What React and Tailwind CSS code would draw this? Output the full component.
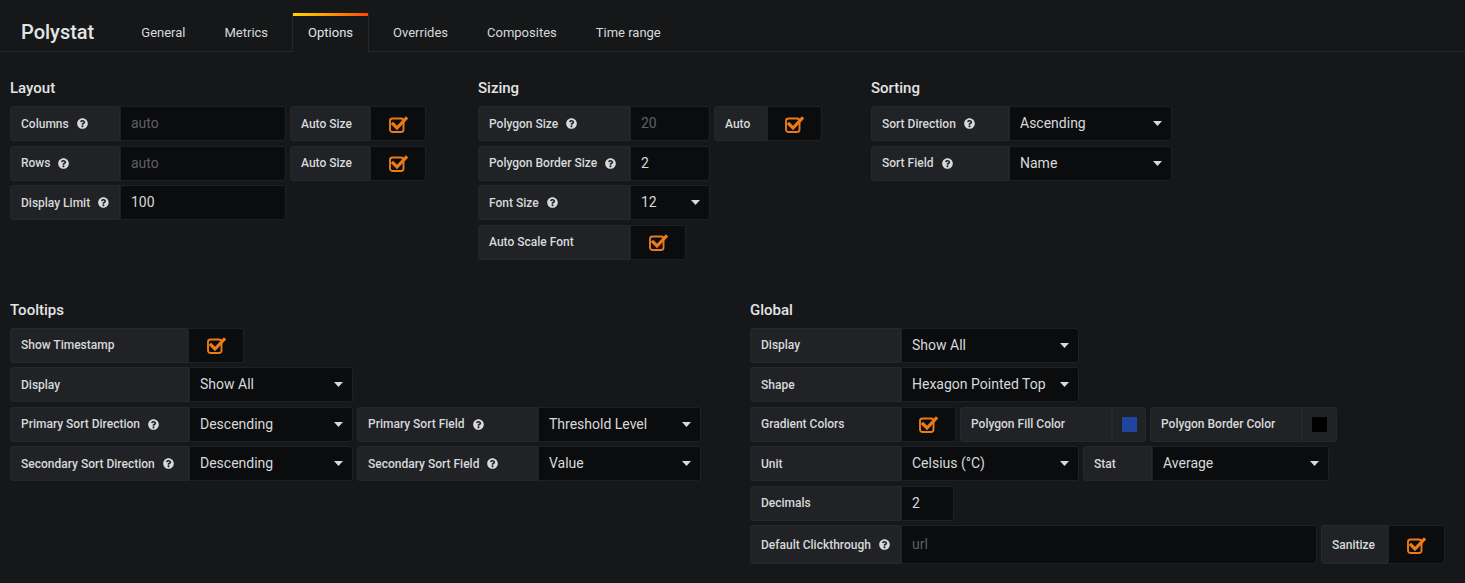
import { FaQuestionCircle } from "react-icons/fa";

// ─────────────────────────────────────────────
// SMALL PIECES
// ─────────────────────────────────────────────
const Help = () => (
  <FaQuestionCircle size={11} className="ml-[8px] text-[#d8d9da]" />
);

const Label = ({ w, help, children }) => (
  <div
    className={`${w} h-full flex items-center px-[10px] bg-[#202226] border border-[#26272b] rounded-l-[3px] text-[12px] font-medium text-[#d8d9da] whitespace-nowrap`}
  >
    {children}
    {help && <Help />}
  </div>
);

const Input = ({ w, value, placeholder }) => (
  <div
    className={`${w} h-full flex items-center px-[10px] bg-[#0b0c0e] border border-[#1f2023] rounded-r-[3px] text-[14px]`}
  >
    {value ? (
      <span className="text-[#d8d9da]">{value}</span>
    ) : (
      <span className="text-[#5f6064]">{placeholder}</span>
    )}
  </div>
);

const Select = ({ w, value }) => (
  <div
    className={`${w} h-full flex items-center justify-between pl-[10px] pr-[9px] bg-[#0b0c0e] border border-[#1f2023] rounded-r-[3px] text-[14px] text-[#d8d9da]`}
  >
    <span>{value}</span>
    <svg width="9" height="5" viewBox="0 0 9 5">
      <path d="M0 0 L9 0 L4.5 5 Z" fill="#d8d9da" />
    </svg>
  </div>
);

const CheckIcon = () => (
  <svg width="19" height="17" viewBox="0 0 19 17">
    <rect
      x="1"
      y="2.5"
      width="13.5"
      height="13.5"
      rx="2.5"
      fill="none"
      stroke="#eb7b18"
      strokeWidth="1.9"
    />
    <path
      d="M4 8 L8 12 L17 2.5"
      fill="none"
      stroke="#eb7b18"
      strokeWidth="3.2"
      strokeLinecap="square"
    />
  </svg>
);

const Check = ({ w }) => (
  <div
    className={`${w} h-full flex items-center justify-center pt-[1px] bg-[#0b0c0e] border border-[#1f2023] rounded-r-[3px]`}
  >
    <CheckIcon />
  </div>
);

const Swatch = ({ w, color }) => (
  <div
    className={`${w} h-full flex items-center justify-center bg-[#202226] border border-[#26272b] rounded-r-[3px]`}
  >
    <div className={`w-[15px] h-[15px] ${color}`} />
  </div>
);

const Row = ({ children, h = "h-[35px]" }) => (
  <div className={`flex gap-[4px] ${h}`}>{children}</div>
);

const Group = ({ children }) => <div className="flex h-full">{children}</div>;

const Section = ({ title, w, children }) => (
  <section className={w}>
    <h3 className="text-[15px] leading-[20px] font-medium text-[#e3e4e5] mb-[8px]">
      {title}
    </h3>
    <div className="flex flex-col gap-[4.5px]">{children}</div>
  </section>
);

const tabs = ["General", "Metrics", "Options", "Overrides", "Composites", "Time range"];

export default function App() {
  return (
    <div className="min-h-screen bg-[#161719] text-[#d8d9da] font-[family-name:Roboto,sans-serif]">
      {/* HEADER */}
      <header className="h-[52px] pt-[13px] flex border-b border-[#26272b] pl-[21px]">
        <div className="flex items-center text-[20px] font-medium text-[#e3e4e5] mr-[32px]">
          Polystat
        </div>
        <nav className="flex gap-[9px]">
          {tabs.map((t) =>
            t === "Options" ? (
              <div
                key={t}
                className="flex flex-col h-[39px] border-x border-[#26272b] bg-[#161719] relative z-10"
              >
                <div className="h-[3px] bg-linear-to-r from-[#ffd500] to-[#ff4400]" />
                <div className="flex-1 flex items-center px-[15px] text-[13px] text-[#e3e4e5] pb-[3px]">
                  {t}
                </div>
              </div>
            ) : (
              <div
                key={t}
                className="flex items-center h-[39px] px-[15px] text-[13px] text-[#d8d9da]"
              >
                {t}
              </div>
            )
          )}
        </nav>
      </header>

      {/* BODY */}
      <div className="pl-[10px] pt-[26px]">
        <div className="flex items-start">
          {/* LAYOUT */}
          <Section title="Layout" w="w-[468px]">
            <Row>
              <Group>
                <Label w="w-[110px]" help>Columns</Label>
                <Input w="w-[166px]" placeholder="auto" />
              </Group>
              <Group>
                <Label w="w-[80px]">Auto Size</Label>
                <Check w="w-[56px]" />
              </Group>
            </Row>
            <Row>
              <Group>
                <Label w="w-[110px]" help>Rows</Label>
                <Input w="w-[166px]" placeholder="auto" />
              </Group>
              <Group>
                <Label w="w-[80px]">Auto Size</Label>
                <Check w="w-[56px]" />
              </Group>
            </Row>
            <Row>
              <Group>
                <Label w="w-[110px]" help>Display Limit</Label>
                <Input w="w-[166px]" value="100" />
              </Group>
            </Row>
          </Section>

          {/* SIZING */}
          <Section title="Sizing" w="w-[393px]">
            <Row>
              <Group>
                <Label w="w-[152px]" help>Polygon Size</Label>
                <Input w="w-[80px]" placeholder="20" />
              </Group>
              <Group>
                <Label w="w-[53px]">Auto</Label>
                <Check w="w-[55px]" />
              </Group>
            </Row>
            <Row>
              <Group>
                <Label w="w-[152px]" help>Polygon Border Size</Label>
                <Input w="w-[80px]" value="2" />
              </Group>
            </Row>
            <Row>
              <Group>
                <Label w="w-[152px]" help>Font Size</Label>
                <Select w="w-[80px]" value="12" />
              </Group>
            </Row>
            <Row>
              <Group>
                <Label w="w-[152px]">Auto Scale Font</Label>
                <Check w="w-[56px]" />
              </Group>
            </Row>
          </Section>

          {/* SORTING */}
          <Section title="Sorting" w="w-[310px]">
            <Row>
              <Group>
                <Label w="w-[138px]" help>Sort Direction</Label>
                <Select w="w-[163px]" value="Ascending" />
              </Group>
            </Row>
            <Row>
              <Group>
                <Label w="w-[138px]" help>Sort Field</Label>
                <Select w="w-[163px]" value="Name" />
              </Group>
            </Row>
          </Section>
        </div>

        <div className="flex items-start mt-[40px]">
          {/* TOOLTIPS */}
          <Section title="Tooltips" w="w-[740px]">
            <Row>
              <Group>
                <Label w="w-[178px]">Show Timestamp</Label>
                <Check w="w-[56px]" />
              </Group>
            </Row>
            <Row>
              <Group>
                <Label w="w-[179px]">Display</Label>
                <Select w="w-[164px]" value="Show All" />
              </Group>
            </Row>
            <Row>
              <Group>
                <Label w="w-[179px]" help>Primary Sort Direction</Label>
                <Select w="w-[164px]" value="Descending" />
              </Group>
              <Group>
                <Label w="w-[181px]" help>Primary Sort Field</Label>
                <Select w="w-[163px]" value="Threshold Level" />
              </Group>
            </Row>
            <Row>
              <Group>
                <Label w="w-[179px]" help>Secondary Sort Direction</Label>
                <Select w="w-[164px]" value="Descending" />
              </Group>
              <Group>
                <Label w="w-[181px]" help>Secondary Sort Field</Label>
                <Select w="w-[163px]" value="Value" />
              </Group>
            </Row>
          </Section>

          {/* GLOBAL */}
          <Section title="Global" w="w-[700px]">
            <Row>
              <Group>
                <Label w="w-[151px]">Display</Label>
                <Select w="w-[178px]" value="Show All" />
              </Group>
            </Row>
            <Row>
              <Group>
                <Label w="w-[151px]">Shape</Label>
                <Select w="w-[178px]" value="Hexagon Pointed Top" />
              </Group>
            </Row>
            <Row>
              <Group>
                <Label w="w-[151px]">Gradient Colors</Label>
                <Check w="w-[55px]" />
              </Group>
              <Group>
                <Label w="w-[152px]">Polygon Fill Color</Label>
                <Swatch w="w-[34px]" color="bg-[#1f45a0]" />
              </Group>
              <Group>
                <Label w="w-[152px]">Polygon Border Color</Label>
                <Swatch w="w-[35px]" color="bg-[#000000]" />
              </Group>
            </Row>
            <Row>
              <Group>
                <Label w="w-[151px]">Unit</Label>
                <Select w="w-[178px]" value="Celsius (°C)" />
              </Group>
              <Group>
                <Label w="w-[69px]">Stat</Label>
                <Select w="w-[177px]" value="Average" />
              </Group>
            </Row>
            <Row>
              <Group>
                <Label w="w-[151px]">Decimals</Label>
                <Input w="w-[53px]" value="2" />
              </Group>
            </Row>
            <Row h="h-[39px]">
              <Group>
                <Label w="w-[151px]" help>Default Clickthrough</Label>
                <Input w="w-[416px]" placeholder="url" />
              </Group>
              <Group>
                <Label w="w-[67px]">Sanitize</Label>
                <Check w="w-[57px]" />
              </Group>
            </Row>
          </Section>
        </div>
      </div>
    </div>
  );
}
